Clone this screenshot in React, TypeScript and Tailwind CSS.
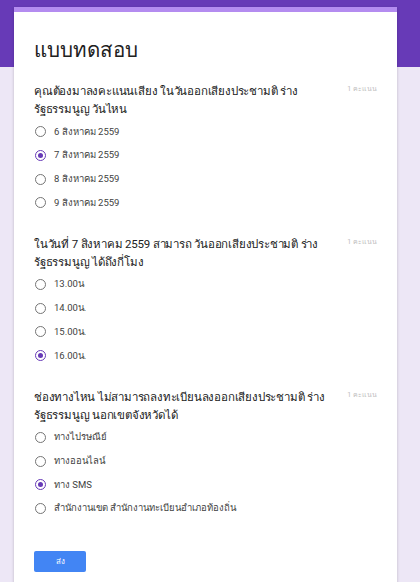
import React from 'react';

interface Question {
  title: string;
  options: string[];
  selected: number;
}

const questions: Question[] = [
  {
    title: 'คุณต้องมาลงคะแนนเสียง ในวันออกเสียงประชามติ ร่างรัฐธรรมนูญ วันไหน',
    options: ['6 สิงหาคม 2559', '7 สิงหาคม 2559', '8 สิงหาคม 2559', '9 สิงหาคม 2559'],
    selected: 1,
  },
  {
    title: 'ในวันที่ 7 สิงหาคม 2559 สามารถ วันออกเสียงประชามติ ร่างรัฐธรรมนูญ ได้ถึงกี่โมง',
    options: ['13.00น', '14.00น.', '15.00น.', '16.00น.'],
    selected: 3,
  },
  {
    title: 'ช่องทางไหน ไม่สามารถลงทะเบียนลงออกเสียงประชามติ ร่างรัฐธรรมนูญ นอกเขตจังหวัดได้',
    options: ['ทางไปรษณีย์', 'ทางออนไลน์', 'ทาง SMS', 'สำนักงานเขต สำนักงานทะเบียนอำเภอท้องถิ่น'],
    selected: 2,
  },
];

function Radio({ checked }: { checked: boolean }) {
  return (
    <span
      className={`flex h-[11px] w-[11px] shrink-0 items-center justify-center rounded-full border ${
        checked ? 'border-[#673ab7]' : 'border-[#757575]'
      }`}
    >
      {checked && <span className="h-[5px] w-[5px] rounded-full bg-[#673ab7]" />}
    </span>
  );
}

export default function App() {
  return (
    <div
      className="h-[582px] overflow-hidden bg-[#ede7f6]"
      style={{ fontFamily: 'Roboto, "Noto Sans", "DejaVu Sans", sans-serif' }}
    >
      <div className="h-[67px] bg-[#673ab7]" />
      <div className="-mt-[60px] ml-[14px] w-[383px] overflow-hidden bg-white shadow-[0_1px_3px_rgba(0,0,0,0.2)]">
        <div className="h-[5px] bg-[#b48cf0]" />
        <div className="px-5 pt-[24px]">
          <h1 className="text-[20.5px] leading-[28px] text-[#212121]">แบบทดสอบ</h1>
        </div>
        <div className="mt-[18px] px-5">
          {questions.map((q, qi) => (
            <div key={qi} className="mb-[20px]">
              <div className="flex items-start">
                {/* line-height 0 on the span keeps mixed Thai/Latin lines at 18px */}
                <div className="h-[36px] w-[300px] text-[11.5px] leading-[18px] tracking-[-0.2px] text-[#212121]">
                  <span className="leading-[0]">{q.title}</span>
                </div>
                <div className="ml-auto pt-[2px] text-[7px] text-[#bdbdbd]">1 คะแนน</div>
              </div>
              <div className="mt-[2px] flex flex-col">
                {q.options.map((o, oi) => (
                  <div key={oi} className="flex h-[23.7px] items-center pl-px">
                    <Radio checked={oi === q.selected} />
                    <span className="ml-[8px] text-[9.5px] text-[#424242]">{o}</span>
                  </div>
                ))}
              </div>
            </div>
          ))}
          <div className="pb-[12px] pt-[11px]">
            <button className="flex h-[21px] w-[52px] items-center justify-center rounded-[2px] bg-[#4285f4] text-[8px] text-white">
              ส่ง
            </button>
          </div>
        </div>
      </div>
    </div>
  );
}
